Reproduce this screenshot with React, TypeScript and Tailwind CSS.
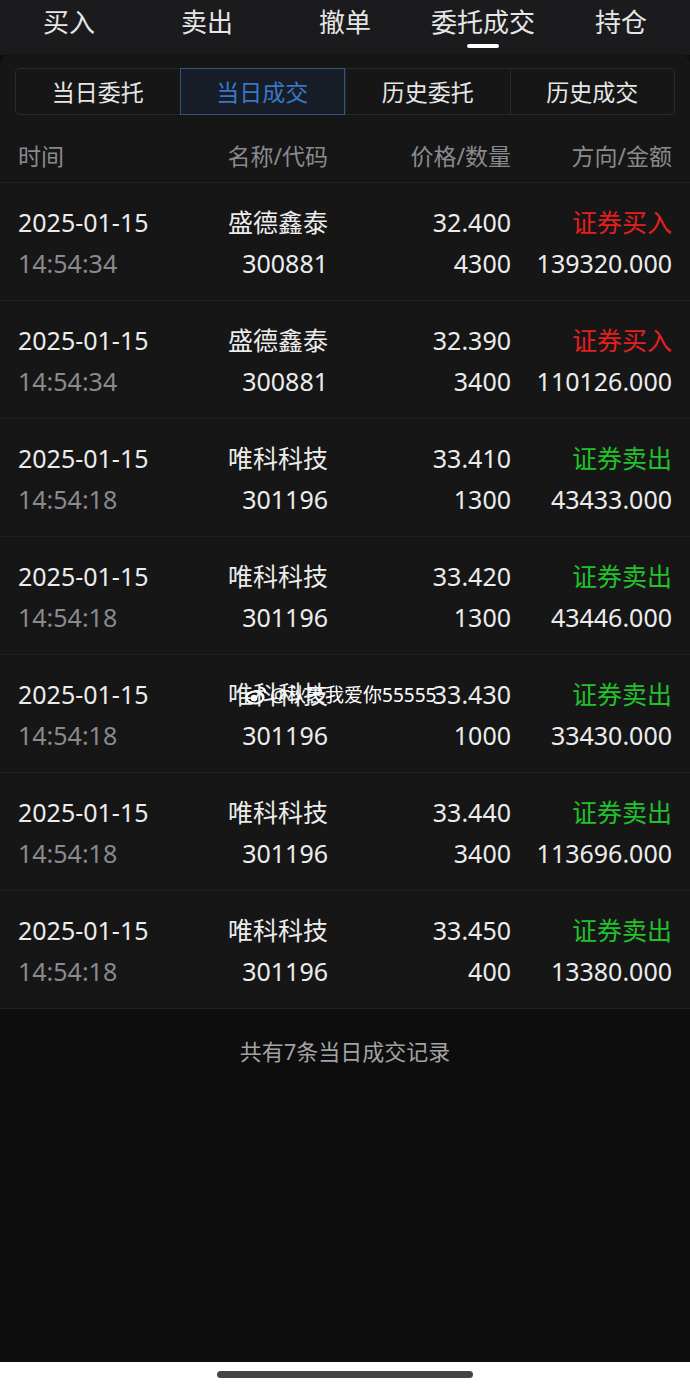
import React from "react";

const FONT = "font-['Noto_Sans','Noto_Sans_CJK_SC',sans-serif]";

const TOP_TABS = ["买入", "卖出", "撤单", "委托成交", "持仓"];
const SUB_TABS = ["当日委托", "当日成交", "历史委托", "历史成交"];

interface Trade {
  date: string;
  time: string;
  name: string;
  code: string;
  price: string;
  qty: string;
  side: "buy" | "sell";
  amount: string;
}

const TRADES: Trade[] = [
  { date: "2025-01-15", time: "14:54:34", name: "盛德鑫泰", code: "300881", price: "32.400", qty: "4300", side: "buy", amount: "139320.000" },
  { date: "2025-01-15", time: "14:54:34", name: "盛德鑫泰", code: "300881", price: "32.390", qty: "3400", side: "buy", amount: "110126.000" },
  { date: "2025-01-15", time: "14:54:18", name: "唯科科技", code: "301196", price: "33.410", qty: "1300", side: "sell", amount: "43433.000" },
  { date: "2025-01-15", time: "14:54:18", name: "唯科科技", code: "301196", price: "33.420", qty: "1300", side: "sell", amount: "43446.000" },
  { date: "2025-01-15", time: "14:54:18", name: "唯科科技", code: "301196", price: "33.430", qty: "1000", side: "sell", amount: "33430.000" },
  { date: "2025-01-15", time: "14:54:18", name: "唯科科技", code: "301196", price: "33.440", qty: "3400", side: "sell", amount: "113696.000" },
  { date: "2025-01-15", time: "14:54:18", name: "唯科科技", code: "301196", price: "33.450", qty: "400", side: "sell", amount: "13380.000" },
];

// weibo share watermark sitting over the 5th row
function Watermark() {
  return (
    <div className="absolute left-[244px] top-[27px] flex items-center gap-[2px] text-[19px] leading-[26px] text-white pointer-events-none">
      <svg width="24" height="20" viewBox="0 0 24 20" fill="none" stroke="white" strokeWidth="2.2">
        <ellipse cx="11" cy="12.5" rx="8.5" ry="6" />
        <circle cx="10" cy="13" r="2.2" fill="white" />
        <path d="M16 2.5 a5.5 5.5 0 0 1 5.5 5.5" />
      </svg>
      <span>@秋裹我爱你55555</span>
    </div>
  );
}

function TradeRow({ t, watermark }: { t: Trade; watermark?: boolean }) {
  const sideColor = t.side === "buy" ? "text-[#e3201f]" : "text-[#22c02b]";
  return (
    <div className="relative h-[118px] border-b border-[#202021] flex items-center px-[18px] pt-[2px]">
      <div className="flex flex-col gap-[8px] w-[200px]">
        <span className="text-[25px] leading-[33px] text-[#ececec]">{t.date}</span>
        <span className="text-[25px] leading-[33px] text-[#8a8a8c]">{t.time}</span>
      </div>
      <div className="flex flex-col gap-[8px] items-end w-[110px]">
        <span className="text-[25px] leading-[33px] text-[#ececec]">{t.name}</span>
        <span className="text-[25px] leading-[33px] text-[#ececec]">{t.code}</span>
      </div>
      <div className="flex flex-col gap-[8px] items-end w-[183px]">
        <span className="text-[25px] leading-[33px] text-[#ececec]">{t.price}</span>
        <span className="text-[25px] leading-[33px] text-[#ececec]">{t.qty}</span>
      </div>
      <div className="flex flex-col gap-[8px] items-end flex-1">
        <span className={`text-[25px] leading-[33px] ${sideColor}`}>
          {t.side === "buy" ? "证券买入" : "证券卖出"}
        </span>
        <span className="text-[25px] leading-[33px] text-[#ececec]">{t.amount}</span>
      </div>
      {watermark && <Watermark />}
    </div>
  );
}

export default function App() {
  return (
    <div className={`w-[690px] h-[1389px] bg-[#0d0d0d] flex flex-col ${FONT}`}>
      {/* Top tabs */}
      <div className="h-[55px] bg-[#1b1b1d] grid grid-cols-5 shrink-0">
        {TOP_TABS.map((tab, i) => (
          <div key={tab} className="relative flex justify-center pt-[4px]">
            <span className="text-[26px] leading-[36px] text-[#e6e6e6]">{tab}</span>
            {i === 3 && (
              <span className="absolute top-[44px] left-1/2 -translate-x-1/2 w-[32px] h-[4px] rounded-full bg-white" />
            )}
          </div>
        ))}
      </div>

      {/* Panel */}
      <div className="bg-[#161617] rounded-t-[10px] -mt-[1px]">
        <div className="px-[15px] pt-[14px]">
          <div className="flex h-[47px] border border-[#29292b] rounded-[4px]">
            {SUB_TABS.map((tab, i) => (
              <div
                key={tab}
                className={
                  i === 1
                    ? "flex-1 flex items-center justify-center border border-[#34547e] bg-[#161d27] -my-[1px] text-[#3b77c6]"
                    : `flex-1 flex items-center justify-center text-[#e6e6e6] ${i > 1 ? "border-l border-[#29292b]" : ""}`
                }
              >
                <span className="text-[23px] leading-[30px]">{tab}</span>
              </div>
            ))}
          </div>
        </div>

        {/* Header */}
        <div className="h-[68px] flex items-center px-[18px] pt-[14px] border-b border-[#222224] text-[23px] leading-[30px] text-[#8a8a8c]">
          <span className="w-[200px]">时间</span>
          <span className="w-[110px] text-right">名称/代码</span>
          <span className="w-[183px] text-right">价格/数量</span>
          <span className="flex-1 text-right">方向/金额</span>
        </div>

        {TRADES.map((t, i) => (
          <TradeRow key={i} t={t} watermark={i === 4} />
        ))}
      </div>

      {/* Footer */}
      <div className="flex-1 flex justify-center pt-[27px]">
        <span className="text-[22px] leading-[30px] text-[#a2a2a4]">共有7条当日成交记录</span>
      </div>

      {/* Home indicator */}
      <div className="h-[27px] bg-white flex justify-center pt-[9px] shrink-0">
        <span className="w-[256px] h-[7px] rounded-full bg-[#454545]" />
      </div>
    </div>
  );
}
